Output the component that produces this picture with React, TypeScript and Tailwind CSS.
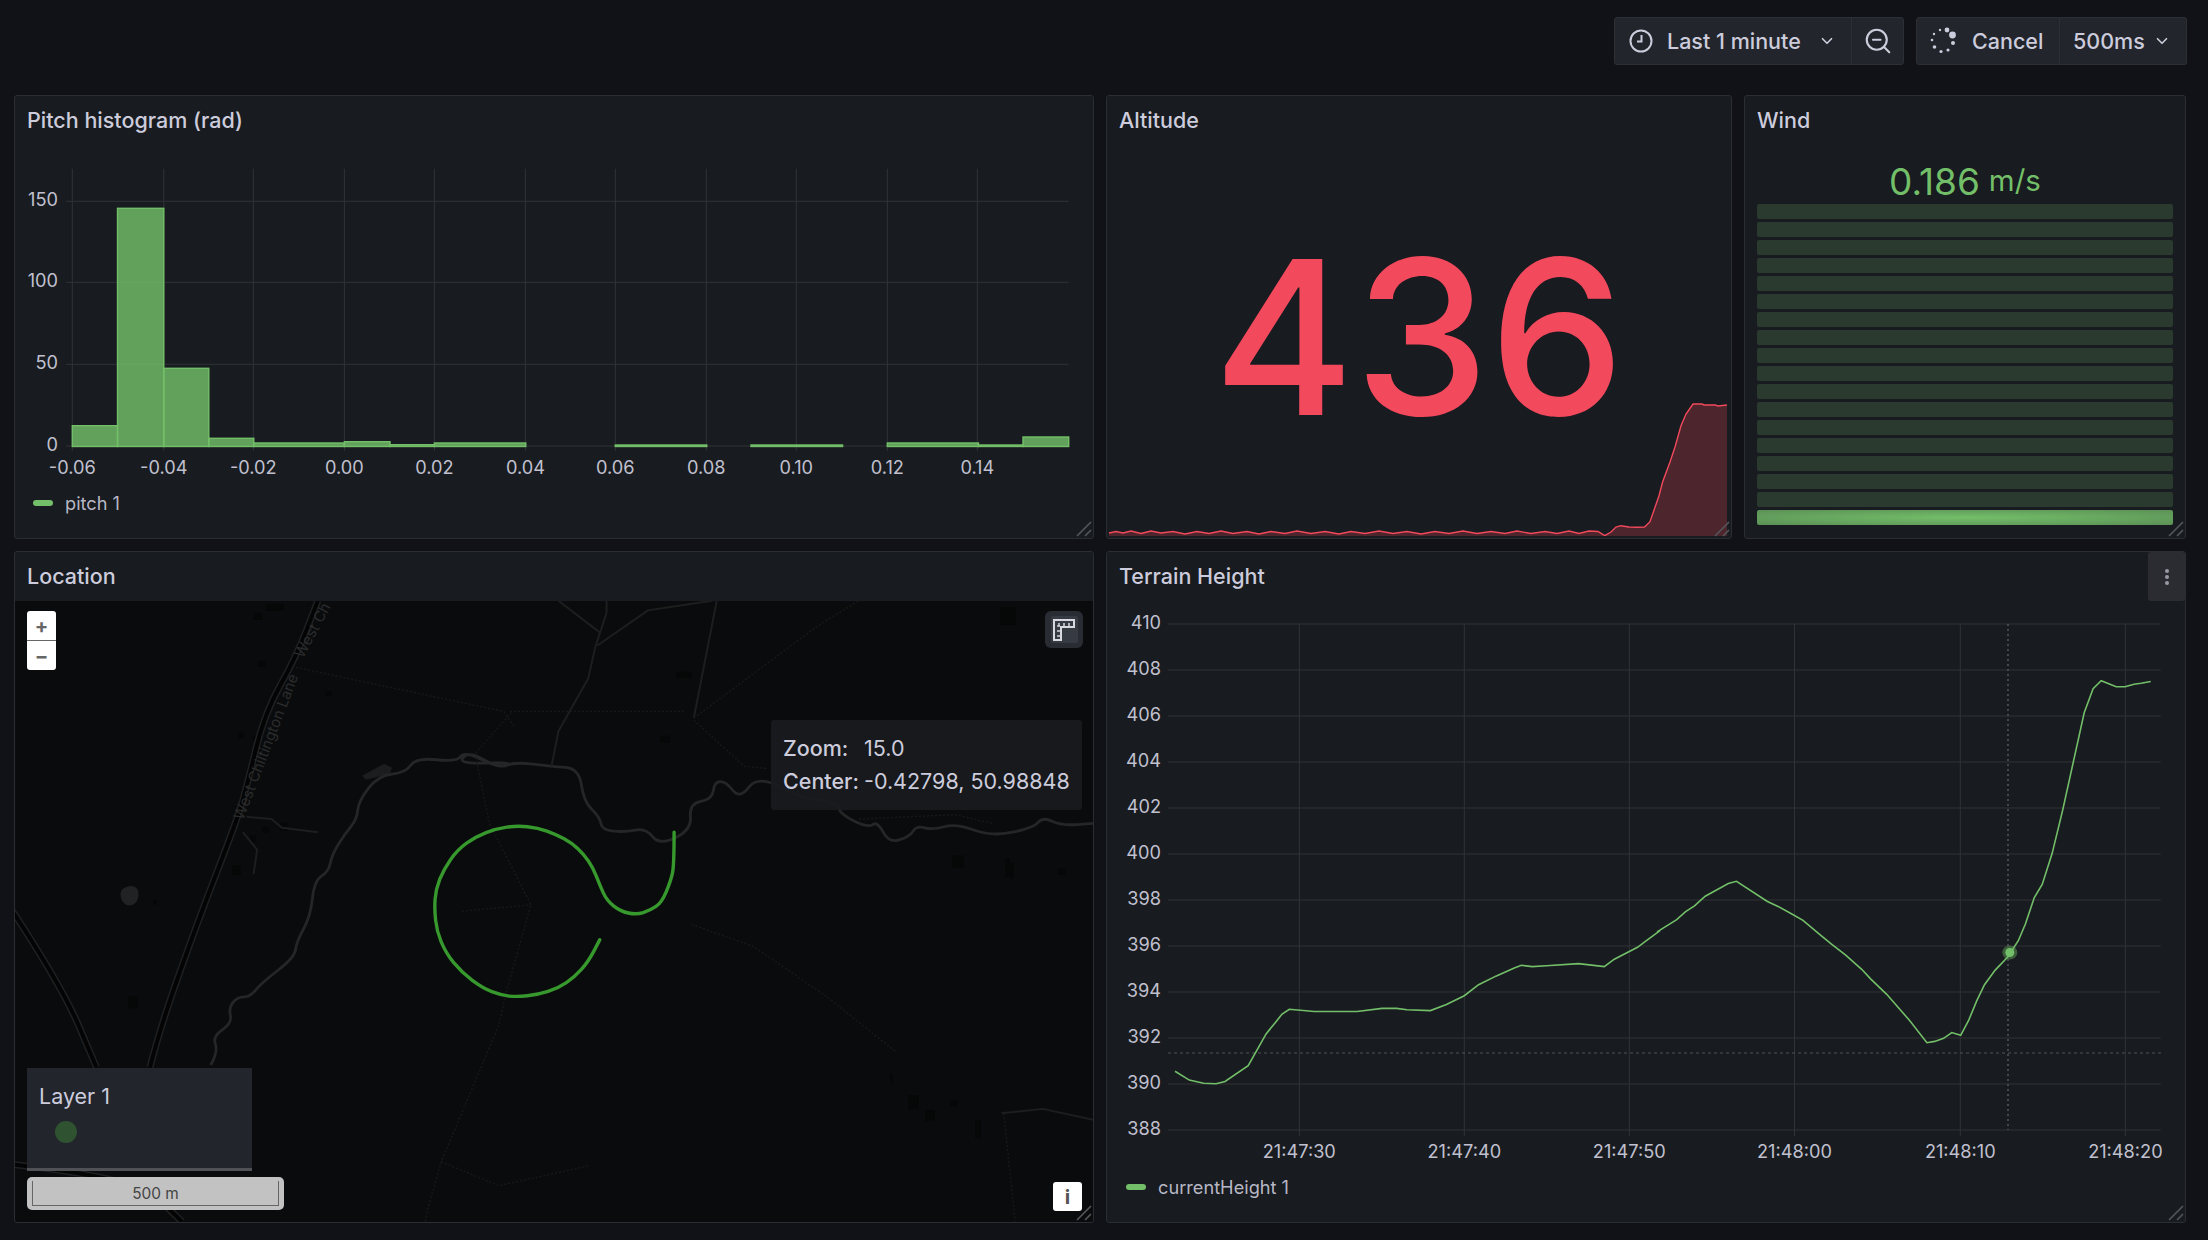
import React from "react";
import { ChevronDown, ZoomOut } from "lucide-react";

type Pt = [number, number];

const pts = (list: Pt[]) => list.map(([x, y]) => `${x.toFixed(1)},${y.toFixed(1)}`).join(" ");

// rounds the corners of a hand-read line, through the midpoints
const smooth = (list: Pt[]) => {
  let d = `M${list[0][0].toFixed(1)} ${list[0][1].toFixed(1)}`;
  for (let i = 1; i < list.length - 1; i++) {
    const [x, y] = list[i];
    const [nx, ny] = list[i + 1];
    d += `Q${x.toFixed(1)} ${y.toFixed(1)} ${((x + nx) / 2).toFixed(1)} ${((y + ny) / 2).toFixed(1)}`;
  }
  const [lx, ly] = list[list.length - 1];
  return `${d}L${lx.toFixed(1)} ${ly.toFixed(1)}`;
};

// map + terrain points were read off crops with different x scales
const mapL = (list: number[][]): Pt[] => list.map(([x, y]) => [x / 2.8, 550 + y / 2.273]);
const mapR = (list: number[][]): Pt[] => list.map(([x, y]) => [400 + x / 2.178, 550 + y / 2.273]);
const terrL = (list: number[][]): Pt[] => list.map(([x, y]) => [1100 + x / 2.8, 550 + y / 2.273]);
const terrR = (list: number[][]): Pt[] => list.map(([x, y]) => [1650 + x / 2.81, 550 + y / 2.273]);

const pitchBars = [
  [72.3, 117.5, 425.7],
  [117.5, 163.8, 208.3],
  [163.8, 208.8, 368.3],
  [208.8, 253.8, 438.3],
  [253.8, 344.4, 443],
  [344.4, 390, 441.7],
  [390, 434.4, 444.7],
  [434.4, 525.8, 443],
  [615.3, 706.8, 445],
  [751, 842.6, 445],
  [887.3, 978.5, 443],
  [978.5, 1023, 445],
  [1023, 1068.7, 437],
];

const pitchX = [
  ["-0.06", 72.3],
  ["-0.04", 163.8],
  ["-0.02", 253.3],
  ["0.00", 344.4],
  ["0.02", 434.4],
  ["0.04", 525.4],
  ["0.06", 615.3],
  ["0.08", 706.3],
  ["0.10", 796.3],
  ["0.12", 887.3],
  ["0.14", 977.3],
] as const;

const pitchY = [
  ["150", 201.3],
  ["100", 282.3],
  ["50", 364.3],
  ["0", 446],
] as const;

const terrainTicks = [
  ["21:47:30", 1299.3],
  ["21:47:40", 1464.3],
  ["21:47:50", 1629.3],
  ["21:48:00", 1794.5],
  ["21:48:10", 1960.3],
  ["21:48:20", 2125.4],
] as const;

const terrainLine: Pt[] = [
  ...terrL([
    [210, 1185], [250, 1205], [290, 1212], [325, 1213], [350, 1208], [415, 1172], [465, 1100], [490, 1075],
    [510, 1055], [530, 1044], [600, 1049], [720, 1049], [790, 1042], [830, 1042], [860, 1045], [925, 1047],
    [970, 1033], [1020, 1013], [1060, 988], [1110, 968], [1160, 950], [1180, 944], [1210, 947], [1250, 945],
    [1340, 940], [1412, 947], [1440, 930], [1505, 903], [1530, 888], [1568, 865],
  ]),
  ...terrR([
    [20, 868], [75, 840], [100, 822], [125, 809], [155, 787], [220, 758], [243, 753], [330, 799], [360, 810],
    [400, 828], [430, 842], [480, 876], [510, 896], [550, 921], [595, 953], [620, 975], [665, 1010], [730, 1070],
    [778, 1120], [800, 1117], [825, 1110], [848, 1097], [873, 1103], [895, 1070], [918, 1025], [940, 988],
    [970, 955], [1005, 925], [1035, 888], [1055, 850], [1080, 790], [1102, 760], [1130, 690], [1160, 590],
    [1190, 480], [1220, 370], [1245, 315], [1268, 297], [1310, 311], [1335, 311], [1360, 305], [1380, 303], [1407, 299],
  ]),
];

const altitudeLine: Pt[] = [
  [1108, 534], [1115, 532.5], [1122, 534], [1130, 532], [1140, 534.5], [1150, 532], [1160, 534], [1172, 532.5],
  [1184, 535], [1196, 532.5], [1208, 534.5], [1220, 532], [1232, 534.5], [1246, 532.5], [1258, 535], [1270, 532.5],
  [1284, 534.5], [1296, 532], [1310, 534.5], [1324, 532.5], [1338, 535], [1350, 532.5], [1364, 534.5], [1378, 532],
  [1392, 534.5], [1406, 532.5], [1420, 535], [1434, 532.5], [1448, 534.5], [1462, 532], [1476, 534.5], [1490, 532.5],
  [1504, 534.5], [1516, 532], [1530, 534.5], [1544, 532.5], [1556, 534.5], [1568, 532], [1578, 534.5], [1588, 532],
  [1597, 532.5], [1603.8, 536.7], [1610, 533], [1615, 528], [1619.6, 526.7], [1628, 528], [1636, 528.3],
  [1643.6, 528], [1649, 522.7], [1658, 496.7], [1661.6, 483], [1669, 463], [1674, 448], [1680, 426.7],
  [1685, 415], [1692, 405], [1701, 405], [1703, 406], [1714, 406], [1717, 407], [1726, 406],
];

const mapStream: Pt[] = [
  ...mapL([
    [590, 1170], [611, 1140], [595, 1105], [650, 1075], [640, 1040], [665, 1015], [700, 1015], [730, 985],
    [825, 925], [830, 890], [870, 830], [880, 750], [920, 730], [930, 690], [965, 645], [1000, 610], [1003, 570],
    [1060, 510], [1135, 505], [1165, 470], [1280, 480], [1300, 455], [1400, 495], [1440, 480],
  ]),
  ...mapR([
    [125, 485], [150, 455], [215, 495], [250, 480], [330, 490], [390, 495], [400, 570], [435, 605], [440, 635],
    [490, 640], [535, 630], [565, 670], [635, 635], [630, 575], [680, 565], [685, 525], [710, 525], [740, 565],
    [780, 510], [880, 565], [950, 570], [960, 600], [1020, 630], [1040, 615], [1065, 665], [1110, 650], [1125, 625],
    [1160, 635], [1210, 620], [1290, 650], [1380, 630], [1400, 605], [1440, 625], [1510, 620],
  ]),
];

const mapSolid: Pt[][] = [
  mapR([[330, 490], [345, 410], [410, 290], [425, 220], [450, 140], [450, 113]]),
  mapR([[430, 215], [540, 135], [680, 113]]),
  mapR([[345, 113], [435, 185]]),
  mapR([[690, 113], [640, 380]]),
  mapR([[1310, 1280], [1400, 1270], [1510, 1295]]),
  mapL([[680, 640], [720, 680], [710, 735]]),
  mapL([[690, 605], [760, 610], [790, 630], [890, 640]]),
];

const mapDotted: Pt[][] = [
  mapR([[640, 385], [750, 490], [800, 495]]),
  mapR([[640, 380], [910, 170], [1000, 113]]),
  mapR([[240, 365], [620, 365]]),
  mapR([[165, 460], [245, 365]]),
  mapL([[830, 265], [1410, 365], [1440, 400]]),
  mapR([[165, 470], [195, 620], [285, 805], [230, 1010], [215, 1080], [90, 1390], [60, 1500], [55, 1527]]),
  mapR([[90, 1390], [215, 1445], [410, 1400]]),
  mapR([[135, 820], [285, 805]]),
  mapR([[635, 850], [770, 900], [930, 1015], [1080, 1140]]),
  mapR([[1315, 1280], [1340, 1527]]),
  mapR([[1000, 610], [1210, 600], [1290, 620]]),
];

const mapBuildings = [
  [253, 612, 10, 7], [266, 603, 18, 7], [258, 660, 8, 6], [325, 690, 7, 5], [238, 732, 6, 6], [252, 735, 6, 5],
  [262, 826, 7, 6], [280, 822, 8, 8], [250, 835, 6, 6], [232, 865, 9, 9], [128, 996, 10, 12], [153, 900, 4, 4],
  [676, 671, 16, 6], [952, 855, 12, 12], [1005, 858, 5, 18], [1010, 862, 4, 16], [908, 1095, 11, 14], [925, 1110, 10, 11],
  [950, 1100, 8, 6], [975, 1120, 6, 18], [660, 735, 10, 7], [1058, 868, 8, 6], [1000, 606, 16, 18], [890, 1075, 3, 8],
];

const resizeLines = (
  <svg className="absolute right-[1px] bottom-[1px]" width="16" height="16" viewBox="0 0 16 16" fill="none" stroke="#55565a" strokeWidth="1.6">
    <path d="M1 15 15 1M9 15 15 9" />
  </svg>
);

function Panel({ title, className, children }: { title?: string; className: string; children: React.ReactNode }) {
  return (
    <section className={`relative flex flex-col overflow-hidden rounded-[3px] border border-[#2a2d32] bg-[#181b1f] ${className}`}>
      {title && (
        <div className="flex h-[49px] shrink-0 items-center pl-[12px] text-[21.5px] leading-none font-medium text-[#ccccdc]">{title}</div>
      )}
      {children}
    </section>
  );
}

function LegendItem({ label }: { label: string }) {
  return (
    <div className="flex items-center gap-[12px] text-[18.2px] leading-none text-[#ccccdc]/90">
      <span className="h-[6px] w-[20px] rounded-full bg-[#73bf69]" />
      {label}
    </div>
  );
}

function Toolbar() {
  return (
    <div className="mr-[-1px] flex h-[48px] shrink-0 justify-end gap-[12px] text-[21.5px] font-medium text-[#ccccdc]">
      <div className="flex h-full overflow-hidden rounded-[3px] border border-[#2c2f34] bg-[#22252b]">
        <div className="flex w-[236px] items-center pl-[14px]">
          <svg width="24" height="24" viewBox="0 0 24 24" fill="none" stroke="currentColor" strokeWidth="2">
            <circle cx="12" cy="12" r="10.5" />
            <path d="M12.5 6v6.5H8" />
          </svg>
          <span className="ml-[14px]">Last 1 minute</span>
          <ChevronDown size={18} strokeWidth={2.2} className="ml-[17px]" />
        </div>
        <div className="flex w-[52px] items-center justify-center border-l border-[#2c2f34]">
          <ZoomOut size={30} strokeWidth={1.7} />
        </div>
      </div>
      <div className="flex h-full">
        <div className="flex w-[144px] items-center rounded-l-[3px] border border-[#2c2f34] bg-[#22252b] pl-[12px]">
          <svg className="shrink-0" width="30" height="32" viewBox="0 0 30 32" fill="currentColor">
            <circle cx="18" cy="5" r="2.4" />
            <circle cx="23.5" cy="10" r="3.4" />
            <circle cx="24" cy="18" r="2" />
            <circle cx="19" cy="25" r="1.6" />
            <circle cx="12" cy="26.5" r="1.6" />
            <circle cx="5.5" cy="22" r="1.8" />
            <circle cx="3" cy="15" r="1.3" />
            <circle cx="5" cy="9" r="1.2" />
            <circle cx="11" cy="5" r="1.2" />
          </svg>
          <span className="ml-[13px]">Cancel</span>
        </div>
        <div className="flex w-[127px] items-center rounded-r-[3px] border border-l-0 border-[#2c2f34] bg-[#22252b] pl-[13px]">
          500ms
          <ChevronDown size={18} strokeWidth={2.2} className="ml-[8px]" />
        </div>
      </div>
    </div>
  );
}

function PitchChart() {
  return (
    <svg className="block h-[343px] w-full" viewBox="15 145 1078 343">
      {pitchX.map(([label, x]) => (
        <g key={label}>
          <line x1={x} x2={x} y1="168.7" y2="451" stroke="#303337" />
          <text x={x} y="474" textAnchor="middle" fontSize="18.2" fill="#c0c0cf">{label}</text>
        </g>
      ))}
      {pitchY.map(([label, y]) => (
        <g key={label}>
          <line x1="66" x2="1068.5" y1={y} y2={y} stroke="#303337" />
          <text x="58" y={y + 5} textAnchor="end" fontSize="18.2" fill="#c0c0cf">{label}</text>
        </g>
      ))}
      {pitchBars.map(([x1, x2, top]) => (
        <rect key={x1} x={x1} y={top} width={x2 - x1} height={446.5 - top} fill="#73bf69" fillOpacity="0.82" stroke="#73bf69" strokeWidth="1.4" />
      ))}
    </svg>
  );
}

function AltitudePanel() {
  return (
    <Panel title="Altitude" className="w-[626px]">
      <svg className="absolute right-[3px] bottom-[2px]" width="620" height="140" viewBox="1107 397 620 140">
        <polygon points={`1108,537 ${pts(altitudeLine)} 1726,537`} fill="#f2495c" fillOpacity="0.24" />
        <polyline points={pts(altitudeLine)} fill="none" stroke="#f2495c" strokeWidth="1.4" />
      </svg>
      <div className="relative mt-[22px] text-center text-[215px] leading-[340px] font-medium text-[#f2495c]">436</div>
      {resizeLines}
    </Panel>
  );
}

function WindPanel() {
  return (
    <Panel title="Wind" className="flex-1">
      <div className="mt-[13px] flex h-[46px] items-center justify-center gap-[9px] text-[#73bf69]">
        <span className="text-[37px] leading-none">0.186</span>
        <span className="text-[29.5px] leading-none">m/s</span>
      </div>
      <div className="flex flex-col gap-[3px] px-[12px]">
        {Array.from({ length: 18 }, (_, i) =>
          i === 17 ? (
            <div key={i} className="h-[15px] rounded-[2px] bg-[radial-gradient(ellipse_at_center,#73bf69_0%,#5b8f56_100%)]" />
          ) : (
            <div key={i} className="h-[15px] rounded-[2px] bg-[#2a3a2e]" />
          ),
        )}
      </div>
      {resizeLines}
    </Panel>
  );
}

function MapDrawing() {
  return (
    <svg className="absolute inset-0 h-full w-full" viewBox="15 600 1078 622" preserveAspectRatio="none" fill="none">
      {mapBuildings.map(([x, y, w, h], i) => (
        <rect key={i} x={x} y={y} width={w} height={h} fill="#060707" />
      ))}
      <path d="M122 889c6-5 14-5 16 1 2 8-2 15-9 15-6 0-11-10-7-16z" fill="#212223" />
      <path d="M362 775l22-12 8 4-2 6-12 3-12 3z" fill="#1c1d1e" />
      <path d={smooth(mapStream)} stroke="#252627" strokeWidth="2.8" />
      {mapSolid.map((line, i) => (
        <polyline key={i} points={pts(line)} stroke="#1d1e1f" strokeWidth="2" strokeLinejoin="round" />
      ))}
      {mapDotted.map((line, i) => (
        <polyline key={i} points={pts(line)} stroke="#19191b" strokeWidth="1.4" strokeDasharray="2 2" />
      ))}
      {[
        mapL([[420, 1175], [450, 1080], [560, 830], [660, 620], [690, 540], [740, 370], [830, 240], [890, 113]]),
        mapL([[15, 795], [170, 985], [270, 1175]]),
        mapL([[15, 1395], [380, 1425], [510, 1527]]),
      ].map((line, i) => (
        <g key={i}>
          <path d={smooth(line)} stroke="#1f2021" strokeWidth="7" />
          <path d={smooth(line)} stroke="#040404" strokeWidth="4" />
        </g>
      ))}
      <g fill="#2a2b2c" fontSize="15">
        <text transform="translate(243 820) rotate(-69)">West Chiltington Lane</text>
        <text transform="translate(303 658) rotate(-62)">West Ch</text>
      </g>
      <path
        d={smooth(
          mapR([
            [597, 640], [597, 715], [590, 750], [570, 800], [545, 818], [515, 828], [480, 820], [450, 795], [435, 760], [420, 720],
            [400, 690], [375, 665], [340, 645], [300, 630], [255, 625], [210, 632], [165, 650], [125, 680], [95, 725], [78, 770],
            [75, 815], [80, 865], [100, 915], [135, 960], [180, 995], [220, 1011], [255, 1015], [300, 1010], [345, 995], [380, 970],
            [410, 935], [435, 885],
          ]),
        )}
        stroke="#37992d"
        strokeWidth="3.4"
        strokeLinecap="round"
      />
    </svg>
  );
}

function LocationPanel() {
  return (
    <Panel title="Location" className="w-[1080px]">
      <div className="relative flex-1 overflow-hidden bg-[#0a0b0c]">
        <MapDrawing />
        <div className="absolute top-[10px] left-[12px] flex w-[29px] flex-col overflow-hidden rounded-[3px] bg-white font-bold text-[#666]">
          <div className="flex h-[30px] items-center justify-center border-b border-[#666] text-[20px] leading-none">+</div>
          <div className="flex h-[29px] items-center justify-center text-[20px] leading-none">−</div>
        </div>
        <div className="absolute top-[10px] right-[10px] flex h-[37px] w-[38px] items-center justify-center rounded-[6px] bg-[#2a2c33]">
          <div className="flex h-[27px] w-[27px] items-center justify-center rounded-[2px] bg-[#363a42]">
            <svg width="22" height="22" viewBox="0 0 22 22" fill="none" stroke="#d8d8e0" strokeWidth="2">
              <path d="M1 1h20v7H8v13H1z" />
              <path d="M6 4v3M11 4v3M16 4v3M4 7h3M4 12h3M4 17h3" strokeWidth="1.5" />
            </svg>
          </div>
        </div>
        <div className="absolute top-[119px] right-[11px] grid h-[90px] w-[311px] grid-cols-[81px_1fr] content-center gap-y-[11px] whitespace-nowrap rounded-[3px] bg-[#181b1f]/90 pb-[2px] pl-[12px] text-[21.5px] leading-[22px] text-[#ccccdc]">
          <span className="font-medium">Zoom:</span>
          <span>15.0</span>
          <span className="font-medium">Center:</span>
          <span>-0.42798, 50.98848</span>
        </div>
        <div className="absolute bottom-[51px] left-[12px] h-[103px] w-[225px] border-b-[3px] border-[#4f5156] bg-[#22252b] pt-[17px] pl-[12px] text-[21.5px] leading-[22px] text-[#ccccdc]">
          Layer 1
          <div className="mt-[14px] ml-[16px] h-[22px] w-[22px] rounded-full bg-[#2f5230]" />
        </div>
        <div className="absolute bottom-[12px] left-[12px] h-[33px] w-[257px] rounded-[5px] bg-[#c2c2c2] px-[5px] pt-[4px]">
          <div className="flex h-[25px] items-center justify-center border-x border-b border-[#666] pt-[1px] text-[15.4px] leading-none text-[#444]">500 m</div>
        </div>
        <div className="absolute right-[11px] bottom-[11px] flex h-[29px] w-[29px] items-center justify-center rounded-[3px] bg-white text-[20px] leading-none font-bold text-[#555]">i</div>
      </div>
      {resizeLines}
    </Panel>
  );
}

function TerrainPanel() {
  const labels = [410, 408, 406, 404, 402, 400, 398, 396, 394, 392, 390, 388];
  return (
    <Panel title="Terrain Height" className="flex-1">
      <div className="absolute top-0 right-0 flex h-[49px] w-[37px] items-center justify-center rounded-[3px] bg-[#2a2c31]">
        <svg width="6" height="18" viewBox="0 0 6 18" fill="#9a9aa6">
          <circle cx="3" cy="3" r="2" />
          <circle cx="3" cy="9" r="2" />
          <circle cx="3" cy="15" r="2" />
        </svg>
      </div>
      <svg className="block h-[570px] w-full" viewBox="1107 601 1078 570">
        {labels.map((label, i) => {
          const y = 624 + i * 46;
          return (
            <g key={label}>
              <line x1="1168" x2="2160.7" y1={y} y2={y} stroke="#303337" />
              <text x="1161" y={y + 5} textAnchor="end" fontSize="18.2" fill="#c0c0cf">{label}</text>
            </g>
          );
        })}
        {terrainTicks.map(([label, x]) => (
          <g key={label}>
            <line x1={x} x2={x} y1="624" y2="1136" stroke="#303337" />
            <text x={x} y="1158" textAnchor="middle" fontSize="18.2" fill="#c0c0cf">{label}</text>
          </g>
        ))}
        <line x1="1168" x2="2161" y1="1053" y2="1053" stroke="#50535a" strokeDasharray="3 3" />
        <line x1="2008" x2="2008" y1="624" y2="1130" stroke="#50535a" strokeWidth="1.6" strokeDasharray="2 3" />
        <polyline points={pts(terrainLine)} fill="none" stroke="#73bf69" strokeWidth="1.6" />
        <ellipse cx="2009.8" cy="952.5" rx="7.5" ry="7" fill="#73bf69" fillOpacity="0.4" />
        <circle cx="2009.8" cy="952.5" r="4.5" fill="#73bf69" />
      </svg>
      <div className="pl-[19px] pt-[7px]">
        <LegendItem label="currentHeight 1" />
      </div>
      {resizeLines}
    </Panel>
  );
}

export default function App() {
  return (
    <div className="flex h-[1240px] w-[2208px] flex-col bg-[#111217] pt-[17px] pr-[22px] pl-[14px] font-['Inter',sans-serif]">
      <Toolbar />
      <div className="mt-[30px] flex h-[444px] shrink-0 gap-[12px]">
        <Panel title="Pitch histogram (rad)" className="w-[1080px]">
          <PitchChart />
          <div className="pl-[18px] pt-[6px]">
            <LegendItem label="pitch 1" />
          </div>
          {resizeLines}
        </Panel>
        <AltitudePanel />
        <WindPanel />
      </div>
      <div className="mt-[12px] flex h-[672px] shrink-0 gap-[12px]">
        <LocationPanel />
        <TerrainPanel />
      </div>
    </div>
  );
}
